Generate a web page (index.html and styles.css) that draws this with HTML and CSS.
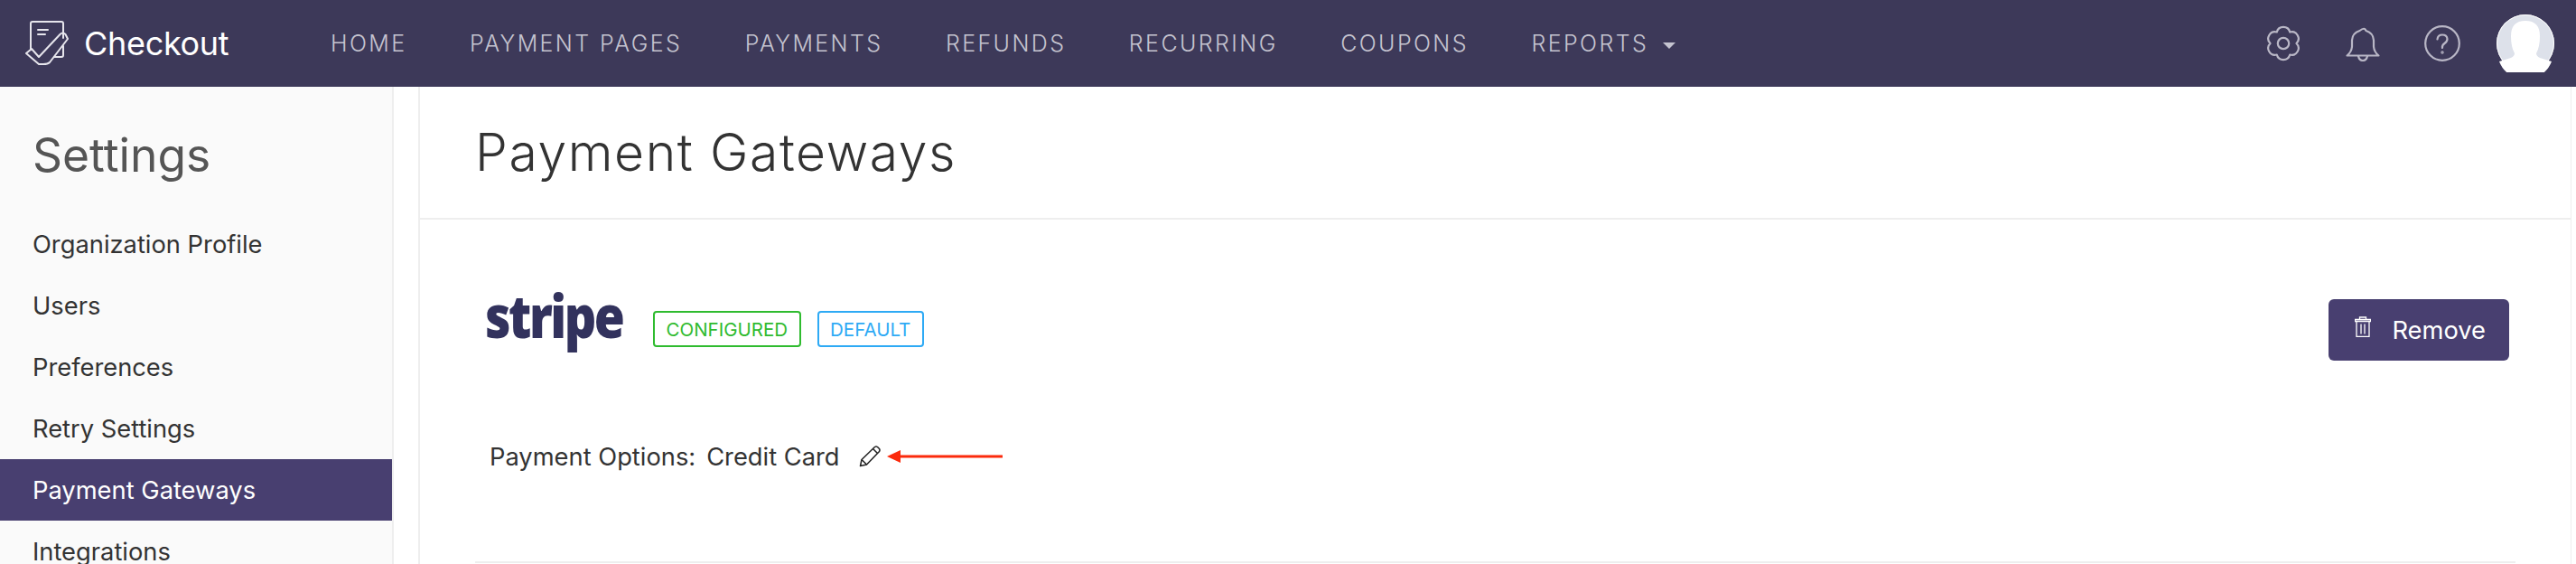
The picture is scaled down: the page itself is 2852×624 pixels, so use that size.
FILE: index.html
```html
<!DOCTYPE html>
<html lang="en">
<head>
    <meta charset="UTF-8">
    <title>Payment Gateways - Checkout</title>
    <link rel="stylesheet" href="styles.css">
</head>
<body>
    <header class="topbar">
        <a class="brand">
            <svg class="brand-icon" viewBox="0 0 48 50" fill="none" stroke="#e6e5ec" stroke-width="2" stroke-linecap="round" stroke-linejoin="round">
                <path d="M6 32V3q0-2 2-2h32q2 0 2 2v16"/>
                <path d="M42 28v10q0 2-2 2h-8"/>
                <path d="M14 10h11M14 15h8"/>
                <path d="M1 36l6-5 8 9L38.500 15q3-3 6 0l2.500 5L27 46q-2 2-7 2h-5z"/>
            </svg>
            <span class="brand-name">Checkout</span>
        </a>
        <nav class="main-nav">
            <a>HOME</a>
            <a>PAYMENT PAGES</a>
            <a>PAYMENTS</a>
            <a>REFUNDS</a>
            <a>RECURRING</a>
            <a>COUPONS</a>
            <a>REPORTS <span class="caret"></span></a>
        </nav>
        <div class="top-actions">
            <svg class="top-icon" viewBox="0 0 40 40" fill="none" stroke="#b9b7c6" stroke-width="2.2" stroke-linejoin="round">
                <path d="M12.750 7.440A7.500 7.500 0 0 1 27.250 7.440A7.500 7.500 0 0 1 34.500 20A7.500 7.500 0 0 1 27.250 32.560A7.500 7.500 0 0 1 12.750 32.560A7.500 7.500 0 0 1 5.500 20A7.500 7.500 0 0 1 12.750 7.440z"/>
                <circle cx="20" cy="20" r="6.200"/>
            </svg>
            <svg class="top-icon" viewBox="0 0 40 40" fill="none" stroke="#b9b7c6" stroke-width="2.2" stroke-linejoin="round" stroke-linecap="round">
                <path d="M2.500 33.500h35q-5-4-5.500-10v-7q-.5-8-8.500-10.500q-1.500-4.500-7 0q-8 2.500-8.500 10.500v7q-.5 6-5.500 10z"/>
                <path d="M15 34q1 5 5 5t5-5"/>
            </svg>
            <svg class="top-icon" viewBox="0 0 40 40" fill="none" stroke="#b9b7c6" stroke-width="2.2" stroke-linecap="round">
                <circle cx="20" cy="20" r="18.800"/>
                <path d="M14.500 15.500q.5-5 5.500-5t5.500 4.500q0 3-3 5t-2.500 5"/>
                <circle cx="20" cy="30" r=".6"/>
            </svg>
            <svg class="avatar" viewBox="0 0 64 64">
                <circle cx="32" cy="32" r="32" fill="#dde1ea"/>
                <path d="M16 24q0-17 16-17t16 17q0 12-4 19q0 3 4 5l13 4a31 31 0 0 1-58 0l13-4q4-2 4-5q-4-7-4-19z" fill="#fff"/>
                <circle cx="32" cy="32" r="31.500" fill="none" stroke="#fff"/>
            </svg>
        </div>
    </header>

    <div class="page">
        <aside class="sidebar">
            <h2 class="sidebar-title">Settings</h2>
            <ul class="side-menu">
                <li>Organization Profile</li>
                <li>Users</li>
                <li>Preferences</li>
                <li>Retry Settings</li>
                <li class="active">Payment Gateways</li>
                <li>Integrations</li>
            </ul>
        </aside>

        <main class="panel">
            <div class="panel-head">
                <h1>Payment Gateways</h1>
            </div>
            <div class="panel-body">
                <div class="gateway-row">
                    <span class="stripe-logo"><span class="stripe-word">stripe</span></span>
                    <span class="badge badge-green">CONFIGURED</span>
                    <span class="badge badge-blue">DEFAULT</span>
                    <button class="remove-btn">
                        <svg class="trash" viewBox="0 0 18 23" fill="none" stroke="#fff" stroke-width="1.300">
                            <path d="M5.500 3V1h7v2M.5 3.500h17v2H.5zM2 5.500v17h14v-17M7 8.500v11M11 8.500v11"/>
                        </svg>
                        Remove
                    </button>
                </div>
                <div class="options-row">
                    <span>Payment Options:</span>
                    <span class="options-value">Credit Card</span>
                    <svg class="pencil" viewBox="0 0 24 24" fill="none" stroke="#222" stroke-width="1.500" stroke-linejoin="round">
                        <path d="M1.500 22.500l1.500-7L17.500 1.500q1.500-1 3 0l2 2q1 1.500 0 3L8.500 21z"/>
                        <path d="M3 15.500l5.500 5.500M15.500 3.500l5 5"/>
                    </svg>
                    <svg class="arrow" viewBox="0 0 128 14">
                        <path d="M0 7L15 0v5.500h113v3H15V14z" fill="#fb2a0c"/>
                    </svg>
                </div>
                <hr class="divider">
            </div>
        </main>
    </div>
</body>
</html>
```

FILE: styles.css
```css
* {
    margin: 0;
    padding: 0;
    box-sizing: border-box;
}

body {
    font-family: Inter, "Liberation Sans", sans-serif;
    background: #fff;
    color: #333;
    height: 624px;
    overflow: hidden;
}

/* top bar */
.topbar {
    display: flex;
    align-items: center;
    height: 96px;
    background: #3d3959;
    padding: 0 24px 0 28px;
}

.brand {
    display: flex;
    align-items: center;
    gap: 17px;
    width: 338px;
}

.brand-icon {
    width: 48px;
    height: 50px;
}

.brand-name {
    font-size: 36px;
    color: #fff;
    letter-spacing: -0.3px;
}

.main-nav {
    display: flex;
    gap: 69.500px;
}

.main-nav a {
    font-size: 25px;
    font-weight: 300;
    letter-spacing: 2.400px;
    color: #c5c4d0;
}

.caret {
    display: inline-block;
    margin-left: 6px;
    vertical-align: 3px;
    border-top: 7px solid #c5c4d0;
    border-left: 7px solid transparent;
    border-right: 7px solid transparent;
}

.top-actions {
    display: flex;
    align-items: center;
    gap: 48px;
    margin-left: auto;
}

.top-icon {
    width: 40px;
    height: 40px;
}

.avatar {
    width: 64px;
    height: 64px;
    margin-left: -8px;
}

/* page */
.page {
    display: flex;
    height: 528px;
}

.sidebar {
    width: 436px;
    flex-shrink: 0;
    background: #fafafa;
    border-right: 2px solid #eee;
}

.sidebar-title {
    font-size: 51.500px;
    font-weight: 400;
    color: #555;
    padding: 45px 36px 0;
    line-height: 60px;
}

.side-menu {
    list-style: none;
    margin-top: 35px;
}

.side-menu li {
    height: 68px;
    line-height: 69px;
    padding-left: 36px;
    font-size: 27.300px;
    color: #333;
}

.side-menu li.active {
    background: #483f70;
    color: #fff;
}

.panel {
    flex: 1;
    margin: 0 5px 0 27px;
    border-left: 2px solid #eee;
    border-right: 1px solid #eee;
}

.panel-head {
    height: 147px;
    padding: 38px 0 0 61px;
    border-bottom: 2px solid #eee;
}

.panel-head h1 {
    font-size: 57px;
    font-weight: 300;
    line-height: 70px;
    letter-spacing: 1.600px;
    color: #333;
}

.panel-body {
    padding: 0 61px 0 61px;
}

.gateway-row {
    display: flex;
    align-items: center;
    height: 160px;
    margin-top: 41px;
}

.stripe-logo {
    width: 197px;
    padding-left: 11px;
    margin-top: -30px;
}

.stripe-word {
    display: inline-block;
    font-family: "Open Sans", sans-serif;
    font-size: 65px;
    font-weight: 800;
    letter-spacing: -3px;
    color: #32325d;
    line-height: 70px;
    transform: scaleX(0.85);
    transform-origin: left center;
}

.badge {
    display: inline-flex;
    align-items: center;
    height: 40px;
    padding: 0 12.500px;
    margin-right: 18px;
    font-size: 20.500px;
    border: 2px solid;
    border-radius: 4px;
}

.badge-green {
    color: #2fbb2f;
    border-color: #2fbb2f;
}

.badge-blue {
    color: #2eaaf5;
    border-color: #2eaaf5;
}

.remove-btn {
    display: flex;
    align-items: center;
    gap: 23px;
    height: 68px;
    padding: 0 26px 0 29px;
    margin-left: auto;
    margin-top: 2px;
    margin-right: 7px;
    background: #483f70;
    border: none;
    border-radius: 6px;
    color: #fff;
    font-family: inherit;
    font-size: 27.300px;
}

.trash {
    width: 18px;
    height: 23px;
    margin-top: -8px;
}

.options-row {
    display: flex;
    align-items: center;
    height: 42px;
    margin-top: 40px;
    padding-left: 16px;
    font-size: 27.300px;
    color: #333;
}

.options-value {
    margin-left: 12px;
}

.pencil {
    width: 24px;
    height: 24px;
    margin-left: 21px;
}

.arrow {
    width: 128px;
    height: 14px;
    margin-left: 7px;
}

.divider {
    margin-top: 95px;
    border: none;
    border-top: 2px solid #eee;
}
```
